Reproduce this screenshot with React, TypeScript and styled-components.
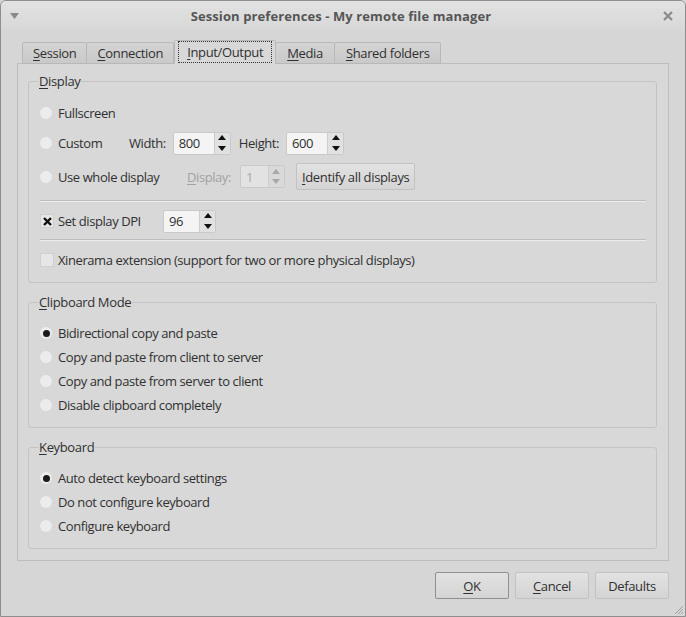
import React from "react";
import styled, { createGlobalStyle } from "styled-components";

const GlobalStyle = createGlobalStyle`
  html, body { margin: 0; padding: 0; background: #d6d6d6; }
  body { font-family: "Open Sans", "Noto Sans", sans-serif; font-size: 13px; color: #303030; }
  * { box-sizing: border-box; }
`;

const Window = styled.div`
  width: 686px;
  height: 617px;
  border: 1px solid #8e8e8e;
  border-radius: 6px 6px 0 0;
  background: #d6d6d6;
  display: flex;
  flex-direction: column;
  position: relative;
  overflow: hidden;
`;

const TitleBar = styled.div`
  height: 29px;
  flex: none;
  display: flex;
  align-items: center;
  justify-content: space-between;
  padding: 0 12px 0 9px;
  background: linear-gradient(#e2e2e2, #d8d8d8);
`;

const Title = styled.div`
  font-weight: 700;
  font-size: 13px;
  color: #555;
  letter-spacing: 0.1px;
`;

const Body = styled.div`
  flex: 1;
  display: flex;
  flex-direction: column;
  padding: 10px 16px 0 16px;
`;

const TabBar = styled.div`
  display: flex;
  align-items: flex-end;
  padding-left: 5px;
  height: 24px;
  position: relative;
  z-index: 1;
  margin-bottom: -1px;
`;

const Tab = styled.div<{ $active?: boolean; $px?: number }>`
  height: ${(p) => (p.$active ? "24px" : "22px")};
  padding: 0 ${(p) => (p.$active ? 3 : p.$px ?? 11)}px;
  display: flex;
  align-items: center;
  border: 1px solid #b8b8b8;
  border-bottom: ${(p) => (p.$active ? "1px solid #d8d8d8" : "1px solid #b8b8b8")};
  margin-left: ${(p) => (p.$active ? "0" : "-1px")};
  border-radius: 2px 2px 0 0;
  background: ${(p) => (p.$active ? "#d8d8d8" : "linear-gradient(#d4d4d4, #c9c9c9)")};
  color: #303030;
  letter-spacing: -0.35px;
  &:first-child { margin-left: 0; }
`;

const Focus = styled.span`
  border: 1px dotted #333;
  padding: 1px 8px;
`;

const Pane = styled.div`
  height: 498px;
  border: 1px solid #bdbdbd;
  background: #d8d8d8;
  padding: 9px 11px 0 10px;
  display: flex;
  flex-direction: column;
  gap: 11px;
`;

const Group = styled.fieldset`
  margin: 0;
  border: 1px solid #c3c3c3;
  border-radius: 3px;
  padding: 10px 10px 10px 11px;
  display: flex;
  flex-direction: column;
`;

const Legend = styled.legend`
  padding: 0 1px;
  margin-left: -2px;
  line-height: 17px;
  letter-spacing: -0.35px;
`;

const U = styled.span`
  text-decoration: underline;
  text-underline-offset: 2px;
`;

const Row = styled.div<{ $h?: number }>`
  display: flex;
  align-items: center;
  height: ${(p) => p.$h ?? 24}px;
  letter-spacing: -0.42px;
`;

const Item = styled.label<{ $w?: number }>`
  display: flex;
  align-items: center;
  gap: 6px;
  width: ${(p) => (p.$w ? `${p.$w}px` : "auto")};
  flex: none;
`;

const RadioDot = styled.span<{ $on?: boolean }>`
  width: 12px;
  height: 12px;
  border-radius: 50%;
  background: #ececec;
  display: flex;
  align-items: center;
  justify-content: center;
  &::after {
    content: "";
    width: 7px;
    height: 7px;
    border-radius: 50%;
    background: ${(p) => (p.$on ? "#1a1a1a" : "transparent")};
  }
`;

const CheckBox = styled.span`
  width: 14px;
  height: 14px;
  background: #e6e6e6;
  border: 1px solid #cfcfcf;
  display: flex;
  align-items: center;
  justify-content: center;
  margin-right: -2px;
`;

const FieldLabel = styled.span<{ $ml?: number; $mr?: number; $disabled?: boolean }>`
  margin-left: ${(p) => p.$ml ?? 0}px;
  margin-right: ${(p) => p.$mr ?? 7}px;
  color: ${(p) => (p.$disabled ? "#a2a2a2" : "#303030")};
`;

const Spin = styled.div<{ $w: number; $disabled?: boolean }>`
  width: ${(p) => p.$w}px;
  height: 23px;
  display: flex;
  border: 1px solid #c9c9c9;
  border-radius: 2px;
  background: ${(p) => (p.$disabled ? "#e2e2e2" : "#f4f4f4")};
  color: ${(p) => (p.$disabled ? "#a8a8a8" : "#303030")};
  flex: none;
`;

const SpinValue = styled.div`
  flex: 1;
  display: flex;
  align-items: center;
  padding-left: 5px;
`;

const SpinButtons = styled.div<{ $disabled?: boolean }>`
  width: 16px;
  display: flex;
  flex-direction: column;
  background: ${(p) => (p.$disabled ? "#d9d9d9" : "#e1e1e1")};
  border-left: 1px solid #cdcdcd;
  color: ${(p) => (p.$disabled ? "#a8a8a8" : "#111")};
`;

const Arrow = styled.div`
  flex: 1;
  display: flex;
  align-items: center;
  justify-content: center;
`;

const Button = styled.div<{ $w?: number; $default?: boolean; $ml?: number }>`
  height: 27px;
  width: ${(p) => (p.$w ? `${p.$w}px` : "auto")};
  margin-left: ${(p) => p.$ml ?? 0}px;
  padding: 0 5px;
  display: flex;
  align-items: center;
  justify-content: center;
  white-space: nowrap;
  border: 1px solid ${(p) => (p.$default ? "#8f8f8f" : "#c2c2c2")};
  border-radius: 2px;
  background: linear-gradient(#e2e2e2, #d4d4d4);
  color: #303030;
  letter-spacing: -0.35px;
  flex: none;
`;

const Separator = styled.div<{ $mt: number }>`
  height: 1px;
  background: #bdbdbd;
  border-bottom: 1px solid #ececec;
  box-sizing: content-box;
  margin-top: ${(p) => p.$mt}px;
`;

const Footer = styled.div`
  display: flex;
  justify-content: flex-end;
  gap: 6px;
  padding: 11px 0 0 0;
`;

const Grip = styled.svg`
  position: absolute;
  right: 1px;
  bottom: 1px;
`;

const Up = () => (
  <svg width="8" height="5" viewBox="0 0 8 5"><path d="M0 5 L4 0 L8 5 Z" fill="currentColor" /></svg>
);
const Down = () => (
  <svg width="8" height="5" viewBox="0 0 8 5"><path d="M0 0 L4 5 L8 0 Z" fill="currentColor" /></svg>
);

const SpinBox = ({ value, w, disabled }: { value: string; w: number; disabled?: boolean }) => (
  <Spin $w={w} $disabled={disabled}>
    <SpinValue>{value}</SpinValue>
    <SpinButtons $disabled={disabled}>
      <Arrow><Up /></Arrow>
      <Arrow><Down /></Arrow>
    </SpinButtons>
  </Spin>
);

const Radio = ({ on, children, w }: { on?: boolean; children: React.ReactNode; w?: number }) => (
  <Item $w={w}>
    <RadioDot $on={on} />
    <span>{children}</span>
  </Item>
);

const Spaced = styled(Row)<{ $mt?: number; $mb?: number }>`
  margin-top: ${(p) => p.$mt ?? 0}px;
  margin-bottom: ${(p) => p.$mb ?? 0}px;
`;

export default function App() {
  return (
    <>
      <GlobalStyle />
      <Window>
        <TitleBar>
          <svg width="9" height="6" viewBox="0 0 9 6"><path d="M0 0 L9 0 L4.5 6 Z" fill="#8a8a8a" /></svg>
          <Title>Session preferences - My remote file manager</Title>
          <svg width="10" height="10" viewBox="0 0 10 10">
            <path d="M1 1 L9 9 M9 1 L1 9" stroke="#8a8a8a" strokeWidth="2.2" />
          </svg>
        </TitleBar>
        <Body>
          <TabBar>
            <Tab $px={10}><U>S</U>ession</Tab>
            <Tab $px={10}><U>C</U>onnection</Tab>
            <Tab $active><Focus><U>I</U>nput/Output</Focus></Tab>
            <Tab $px={11}><U>M</U>edia</Tab>
            <Tab $px={11}><U>S</U>hared folders</Tab>
          </TabBar>
          <Pane>
            <Group>
              <Legend><U>D</U>isplay</Legend>
              <Spaced $h={25}>
                <Radio>Fullscreen</Radio>
              </Spaced>
              <Spaced $h={24} $mt={6}>
                <Radio w={89}>Custom</Radio>
                <FieldLabel>Width:</FieldLabel>
                <SpinBox value="800" w={58} />
                <FieldLabel $ml={8}>Height:</FieldLabel>
                <SpinBox value="600" w={58} />
              </Spaced>
              <Spaced $h={27} $mt={8}>
                <Radio w={147}>Use whole display</Radio>
                <FieldLabel $disabled $mr={9}><U>D</U>isplay:</FieldLabel>
                <SpinBox value="1" w={45} disabled />
                <Button $ml={11}><span><U>I</U>dentify all displays</span></Button>
              </Spaced>
              <Separator $mt={10} />
              <Spaced $h={24} $mt={7}>
                <Item $w={123}>
                  <CheckBox>
                    <svg width="9" height="9" viewBox="0 0 9 9">
                      <path d="M1 1 L8 8 M8 1 L1 8" stroke="#111" strokeWidth="2.4" />
                    </svg>
                  </CheckBox>
                  <span>Set display DPI</span>
                </Item>
                <SpinBox value="96" w={53} />
              </Spaced>
              <Separator $mt={6} />
              <Spaced $h={24} $mt={7}>
                <Item>
                  <CheckBox />
                  <span>Xinerama extension (support for two or more physical displays)</span>
                </Item>
              </Spaced>
            </Group>
            <Group>
              <Legend><U>C</U>lipboard Mode</Legend>
              <Row><Radio on>Bidirectional copy and paste</Radio></Row>
              <Row><Radio>Copy and paste from client to server</Radio></Row>
              <Row><Radio>Copy and paste from server to client</Radio></Row>
              <Row><Radio>Disable clipboard completely</Radio></Row>
            </Group>
            <Group>
              <Legend><U>K</U>eyboard</Legend>
              <Row><Radio on>Auto detect keyboard settings</Radio></Row>
              <Row><Radio>Do not configure keyboard</Radio></Row>
              <Row><Radio>Configure keyboard</Radio></Row>
            </Group>
          </Pane>
          <Footer>
            <Button $w={74} $default><span><U>O</U>K</span></Button>
            <Button $w={74}><span><U>C</U>ancel</span></Button>
            <Button $w={74}>Defaults</Button>
          </Footer>
        </Body>
        <Grip width="12" height="12" viewBox="0 0 12 12">
          <path d="M11 3 L3 11 M11 6 L6 11 M11 9 L9 11" stroke="#a0a0a0" strokeWidth="1" />
        </Grip>
      </Window>
    </>
  );
}
